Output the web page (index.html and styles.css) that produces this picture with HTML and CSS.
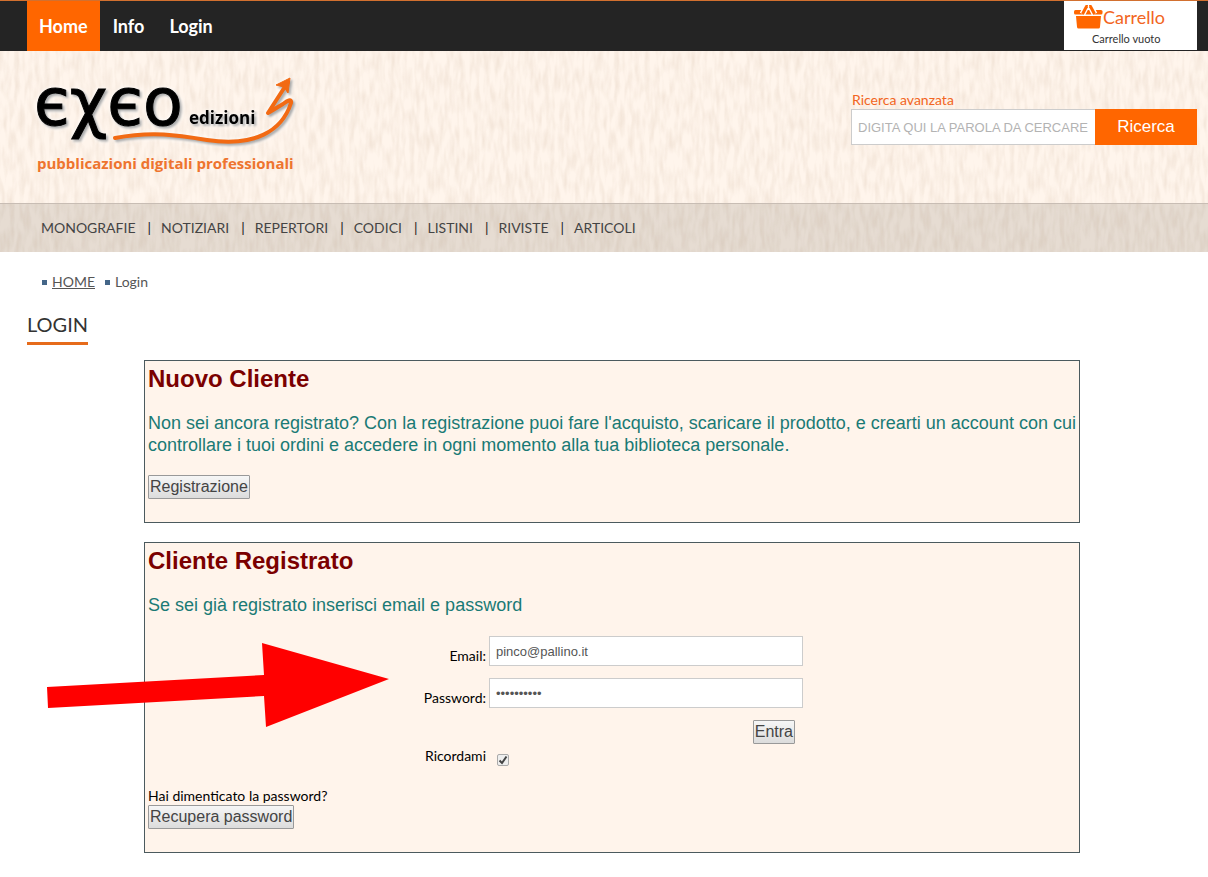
FILE: index.html
```html
<!DOCTYPE html>
<html lang="it">
<head>
  <meta charset="UTF-8">
  <title>Login - Exeo Edizioni</title>
  <meta name="viewport" content="width=device-width, initial-scale=1.0">
  <link rel="stylesheet" href="styles.css">
</head>
<body>

  <!-- Top bar -->
  <div class="topbar">
    <nav class="top-menu">
      <a href="#" class="active">Home</a>
      <a href="#">Info</a>
      <a href="#">Login</a>
    </nav>
    <div class="cart">
      <a href="#" class="cart-title">
        <svg class="cart-icon" width="30" height="25" viewBox="0 0 30 25" aria-hidden="true">
          <path d="M2.500 6H28Q29.500 6 29.500 7.500V9Q29.500 10.500 28 10.500H2.500Q1 10.500 1 9V7.500Q1 6 2.500 6Z" fill="#ff6600"/>
          <path d="M3 12H28L27 23Q26.800 24.500 25.500 24.500H5.500Q4.200 24.500 4 23Z" fill="#ff6600"/>
          <path d="M9.500 10L13.500 2M21.500 10L17.500 2" fill="none" stroke="#fff" stroke-width="6"/>
          <path d="M9.500 10L13.500 2.500M21.500 10L17.500 2.500" fill="none" stroke="#ff6600" stroke-width="3"/>
          <path d="M12.500 1H15L14.500 4H12ZM16 1H18.500L19 4H16.500Z" fill="#ff6600"/>
        </svg>
        <span>Carrello</span>
      </a>
      <p>Carrello vuoto</p>
    </div>
  </div>

  <!-- Header -->
  <header class="header">
    <div class="brand-row">
      <a href="#" class="logo" aria-label="Exeo Edizioni">
        <svg width="270" height="122" viewBox="0 -10 270 122">
          <g class="logo-shadow">
            <text class="logo-name" x="7" y="54">єχєo</text>
            <text class="logo-sub" x="162" y="53">edizioni</text>
            <path d="M88 67C125 60 150 64 180 69C228 76 255 60 264 32C265 27 260 30 256 33L241 42L261 11" fill="none" stroke="#f26a13" stroke-width="4" stroke-linejoin="round" stroke-linecap="round"/>
            <path d="M249 14L263 7L261 22L257 16Z" fill="#f26a13" stroke="#f26a13" stroke-width="1"/>
          </g>
          <text class="logo-claim" x="10" y="98">pubblicazioni digitali professionali</text>
        </svg>
      </a>
      <form class="search">
        <a href="#">Ricerca avanzata</a>
        <div class="search-row">
          <input type="text" aria-label="Cerca" placeholder="DIGITA QUI LA PAROLA DA CERCARE">
          <button type="button">Ricerca</button>
        </div>
      </form>
    </div>
    <nav class="menu">
      <a href="#">MONOGRAFIE</a>
      <a href="#">NOTIZIARI</a>
      <a href="#">REPERTORI</a>
      <a href="#">CODICI</a>
      <a href="#">LISTINI</a>
      <a href="#">RIVISTE</a>
      <a href="#">ARTICOLI</a>
    </nav>
  </header>

  <!-- Content -->
  <main class="content">
    <div class="breadcrumb">
      <a href="#">HOME</a>
      <span>Login</span>
    </div>
    <h1>LOGIN</h1>

    <section class="panel">
      <h2>Nuovo Cliente</h2>
      <p class="intro">Non sei ancora registrato? Con la registrazione puoi fare l'acquisto, scaricare il prodotto, e crearti un account con cui controllare i tuoi ordini e accedere in ogni momento alla tua biblioteca personale.</p>
      <button type="button" class="btn">Registrazione</button>
    </section>

    <section class="panel">
      <h2>Cliente Registrato</h2>
      <p class="intro">Se sei già registrato inserisci email e password</p>

      <form class="login-form">
        <label for="email">Email:</label>
        <input type="email" id="email" value="pinco@pallino.it">
        <label for="password">Password:</label>
        <input type="password" id="password" value="abcdefghij">
        <button type="button" class="btn">Entra</button>
        <label for="remember" class="remember">Ricordami</label>
        <input type="checkbox" id="remember" checked>
      </form>

      <p class="forgot">Hai dimenticato la password?</p>
      <button type="button" class="btn">Recupera password</button>

      <svg class="arrow" width="342" height="84" viewBox="0 0 342 84" aria-hidden="true">
        <path d="M0 44L217 32L215 0L342 36L219 84L217 53L1 65Z" fill="#ff0000"/>
      </svg>
    </section>
  </main>

</body>
</html>
```
FILE: styles.css
```css
* { box-sizing: border-box; }

body {
  margin: 0;
  background: #fff;
  color: #000;
  font-family: Lato, "Open Sans", sans-serif;
  font-size: 14px;
  line-height: 20px;
}

a { color: inherit; text-decoration: none; }
h1, h2, p { margin: 0; }

/* Top bar */
.topbar {
  display: flex;
  justify-content: space-between;
  align-items: flex-start;
  padding: 0 11px 0 27px;
  border-top: 1px solid #d2702f;
  background: #242424;
}

.top-menu { display: flex; gap: 1px; }
.top-menu a {
  padding: 0 12px;
  color: #fff;
  font-size: 18px;
  font-weight: bold;
  line-height: 50px;
}
.top-menu .active { background: #ff6600; }

.cart {
  width: 133px;
  height: 49px;
  padding: 3px 9px;
  background: #fff;
}
.cart-title {
  display: flex;
  height: 26px;
  color: #f26522;
  font-size: 18px;
  line-height: 26px;
}
.cart p {
  padding-left: 19px;
  color: #333;
  font-size: 11px;
  line-height: 18px;
}

/* Header, with the paper texture */
.header {
  background-color: #fff5ec;
  background-image: url("data:image/svg+xml,%3Csvg xmlns='http://www.w3.org/2000/svg' width='300' height='200'%3E%3Cfilter id='p' x='0' y='0' width='1' height='1'%3E%3CfeTurbulence type='fractalNoise' baseFrequency='.2 .05' numOctaves='2' seed='4' stitchTiles='stitch'/%3E%3CfeColorMatrix values='0 0 0 0 .86 0 0 0 0 .74 0 0 0 0 .64 1.4 0 0 0 -.5'/%3E%3C/filter%3E%3Crect width='300' height='200' filter='url(%23p)'/%3E%3C/svg%3E");
}

.brand-row {
  display: flex;
  justify-content: space-between;
  align-items: flex-start;
  min-height: 152px;
  padding: 10px 11px 0 27px;
}

.logo svg { display: block; }
.logo-shadow { filter: drop-shadow(2px 2px 1px #aaa) drop-shadow(0 0 2px #fff); }
.logo-name {
  stroke: #000;
  stroke-width: 1px;
  font-family: "DejaVu Sans", sans-serif;
  font-size: 65px;
}
.logo-sub {
  font-family: "Open Sans", sans-serif;
  font-size: 17px;
  font-weight: bold;
}
.logo-claim {
  fill: #ee742e;
  font-family: "Open Sans", sans-serif;
  font-size: 15px;
  font-weight: bold;
}

.search { width: 346px; padding-top: 29px; }
.search > a {
  display: block;
  padding-left: 1px;
  color: #f26522;
  line-height: 19px;
}
.search-row { display: flex; }
.search input {
  flex: 1;
  min-width: 0;
  height: 36px;
  padding: 0 6px;
  border: 1px solid #ccc;
  border-right: 0;
  background: #fff;
  font-family: "Liberation Sans", sans-serif;
  font-size: 13px;
}
.search input::placeholder { color: #b3b3b3; }
.search button {
  width: 102px;
  padding: 0;
  border: 0;
  background: #ff6600;
  color: #fff;
  font-family: "Liberation Sans", sans-serif;
  font-size: 17px;
}

.menu {
  display: flex;
  padding: 0 41px;
  border-top: 1px solid #c8bdb4;
  background: rgba(80, 70, 60, 0.14);
  color: #444;
  line-height: 48px;
}
.menu a + a::before {
  content: "|";
  padding: 0 10px 0 12px;
  color: #222;
}

/* Content */
.content { padding: 20px 11px 24px 27px; }

.breadcrumb {
  display: flex;
  gap: 10px;
  padding-left: 15px;
  color: #555;
}
.breadcrumb > * { display: flex; align-items: center; gap: 5px; }
.breadcrumb a { text-decoration: underline; }
.breadcrumb > *::before {
  content: "";
  width: 5px;
  height: 5px;
  background: #446688;
}

h1 {
  width: fit-content;
  margin: 19px 0 15px;
  padding-bottom: 5px;
  border-bottom: 3px solid #e66b1b;
  color: #333;
  font-size: 20px;
  font-weight: normal;
  line-height: 26px;
}

.panel {
  position: relative;
  width: 80%;
  margin: 0 auto 19px;
  padding: 3px 3px 23px;
  border: 1px solid #4b5a5e;
  background: #fff4eb;
}

h2 {
  margin-bottom: 18px;
  color: #7b0000;
  font-family: "Liberation Sans", sans-serif;
  font-size: 24px;
  line-height: 30px;
}

.intro {
  margin-bottom: 19px;
  color: #1a7a75;
  font-family: "Liberation Sans", sans-serif;
  font-size: 18px;
  line-height: 22px;
}

.btn {
  display: block;
  height: 24px;
  padding: 0 1px;
  border: 1px solid #999;
  border-radius: 1px;
  background: linear-gradient(#f6f6f6, #dcdcdc);
  color: #444;
  font-family: "Liberation Sans", sans-serif;
  font-size: 16px;
}

.login-form {
  display: grid;
  grid-template-columns: 65px 314px;
  column-gap: 3px;
  row-gap: 12px;
  justify-content: center;
  padding-top: 1px;
}
.login-form label { align-self: end; text-align: right; }
.login-form input:not([type="checkbox"]) {
  height: 30px;
  padding: 0 6px;
  border: 1px solid #ccc;
  background: #fff;
  color: #555;
  font-family: "Liberation Sans", sans-serif;
  font-size: 13px;
}
.login-form .btn {
  grid-column: 2;
  justify-self: end;
  margin-right: 8px;
}
.login-form .remember,
.login-form input[type="checkbox"] { margin-top: -10px; }
.login-form input[type="checkbox"] {
  appearance: none;
  width: 12px;
  height: 12px;
  margin-bottom: 0;
  margin-left: 8px;
  align-self: end;
  border: 1px solid #aaa;
  border-radius: 2px;
  background: #eee url("data:image/svg+xml,%3Csvg xmlns='http://www.w3.org/2000/svg' viewBox='0 0 10 10'%3E%3Cpath d='M1.500 5.500L4 8L8.500 1.500' fill='none' stroke='%23444' stroke-width='2'/%3E%3C/svg%3E");
}

.forgot { margin-top: 20px; line-height: 19px; }

/* Arrow laid over the form */
.arrow {
  position: absolute;
  left: -98px;
  top: 100px;
}
```
